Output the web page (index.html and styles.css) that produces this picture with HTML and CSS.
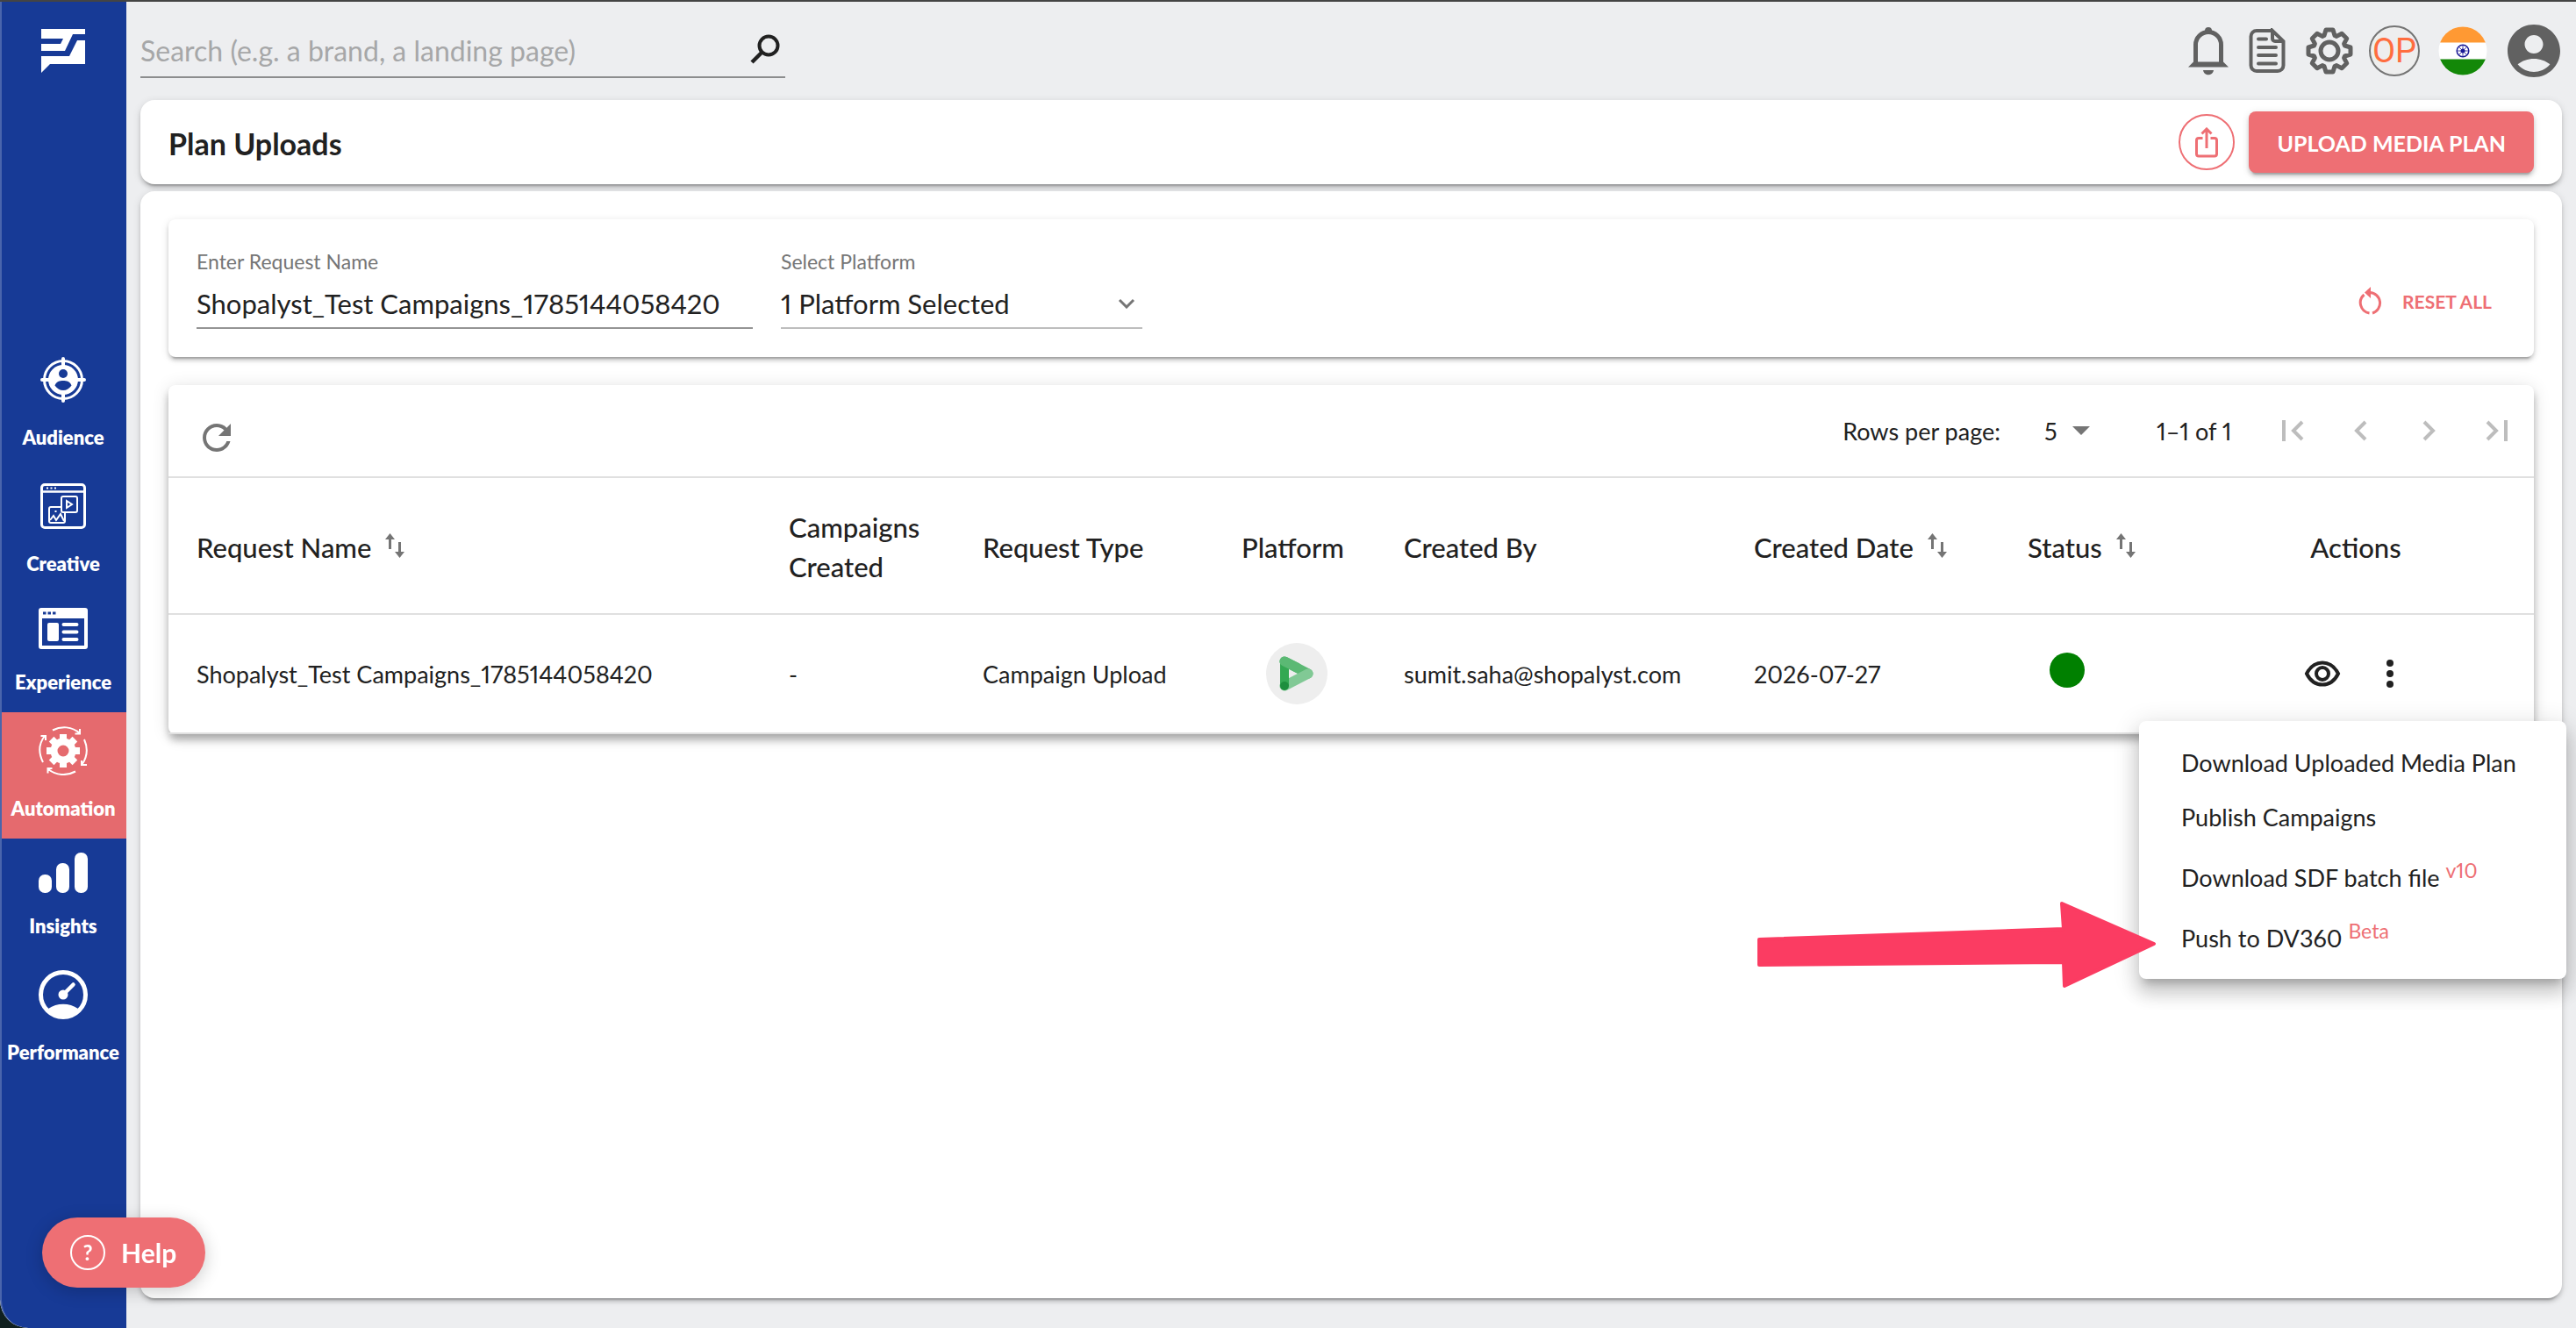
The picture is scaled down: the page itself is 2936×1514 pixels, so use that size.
FILE: index.html
```
<!DOCTYPE html>
<html lang="en">
<head>
  <meta charset="UTF-8" />
  <title>Plan Uploads</title>
  <link rel="stylesheet" href="styles.css">
</head>
<body>
  <div class="app">
    <!-- Left navigation -->
    <aside class="sidebar">
      <a href="#" class="logo" aria-label="Home">
        <svg width="50" height="50" viewBox="0 0 50 50" fill="#fff">
          <path d="M0 0H50V6H36L27 25H0V17H22L25 11H0Z" />
          <path d="M41 13H50V40H10L0 50V31H32Z" />
        </svg>
      </a>
      <nav class="nav">
        <a href="#" class="nav-item">
          <svg width="56" height="56" viewBox="0 0 56 56">
            <circle cx="28" cy="28" r="21.500" fill="none" stroke="#fff" stroke-width="3" />
            <path d="M28 4v8M28 44v8M4 28h8M44 28h8" stroke="#fff" stroke-width="4" stroke-linecap="round" />
            <circle cx="28" cy="28" r="17" fill="#fff" />
            <circle cx="28" cy="21" r="5" fill="#173a96" />
            <path d="M18.500 34.500C20 30 24 29 28 29s8 1 9.500 5.500C35 38 32 40 28 40s-7-2-9.500-5.500z" fill="#173a96" />
          </svg>
          <span>Audience</span>
        </a>
        <a href="#" class="nav-item">
          <svg width="56" height="56" viewBox="0 0 56 56" fill="none" stroke="#fff" stroke-width="2">
            <rect x="3.500" y="3.500" width="49" height="49" rx="3.500" stroke-width="3" />
            <path d="M3 11.500h50" stroke-width="2.500" />
            <path d="M9 7.500h2M13.500 7.500h2M18 7.500h2" />
            <path d="M26 29H14a2 2 0 0 0-2 2v14a2 2 0 0 0 2 2h14a2 2 0 0 0 2-2v-9" />
            <rect x="26" y="17" width="18" height="18" rx="2" />
            <path d="M32 22v8l6-4z" />
            <path d="M13 44l4-5 3 5 5-7 4 8M18.500 34h2" />
          </svg>
          <span>Creative</span>
        </a>
        <a href="#" class="nav-item">
          <svg width="56" height="47" viewBox="0 0 56 47">
            <path fill="#fff" fill-rule="evenodd" d="M3 0h50a3 3 0 0 1 3 3v41a3 3 0 0 1-3 3H3a3 3 0 0 1-3-3V3a3 3 0 0 1 3-3zM4 12v31h48V12z" />
            <path fill="#173a96" d="M5 4.500h3.500v3H5zM10.500 4.500H14v3h-3.500zM16 4.500h3.500v3H16z" />
            <rect x="10" y="17" width="13" height="21" rx="2" fill="#fff" />
            <path d="M28.500 19h15M28.500 27.500h15M28.500 36h15" stroke="#fff" stroke-width="4" stroke-linecap="round" />
          </svg>
          <span>Experience</span>
        </a>
        <a href="#" class="nav-item active">
          <svg width="56" height="56" viewBox="0 0 56 56" fill="none" stroke="#fff" stroke-width="2">
            <circle cx="28" cy="28" r="10.500" stroke-width="8" />
            <path d="M28 9v6M28 41v6M9 28h6M41 28h6M14.600 14.600l4.200 4.200M37.200 37.200l4.200 4.200M14.600 41.400l4.200-4.200M37.200 18.800l4.200-4.200" stroke-width="8" />
            <path d="M16 4.500C26-.5 38 0 47 8M47 3v5.500h-5.500" />
            <path d="M52 15c4 9 4 19-2.500 28.500M55 44l-6 0v-5" />
            <path d="M42 51.500C32 57 20 56 11 49M15.500 48H10.500v5.500" />
            <path d="M5 41C0 31 0 20 7 11M2.500 11H8v5" />
          </svg>
          <span>Automation</span>
        </a>
        <a href="#" class="nav-item">
          <svg width="56" height="46" viewBox="0 0 56 46" fill="#fff">
            <rect x="0" y="25" width="15" height="21" rx="7" />
            <rect x="20" y="12" width="15" height="34" rx="7" />
            <rect x="41" y="0" width="15" height="46" rx="7" />
          </svg>
          <span>Insights</span>
        </a>
        <a href="#" class="nav-item">
          <svg width="56" height="56" viewBox="0 0 56 56">
            <circle cx="28" cy="28" r="25.500" fill="none" stroke="#fff" stroke-width="5" />
            <path d="M11 44c10-7 24-7 34 0-8 12-26 12-34 0z" fill="#fff" />
            <circle cx="28" cy="28" r="5.500" fill="#fff" />
            <path d="M28 28L39.500 16.500" stroke="#fff" stroke-width="4.500" stroke-linecap="round" />
          </svg>
          <span>Performance</span>
        </a>
      </nav>
    </aside>

    <div class="page">
      <header class="topbar">
        <label class="search">
          <input type="text" placeholder="Search (e.g. a brand, a landing page)" aria-label="Search">
          <svg width="34" height="34" viewBox="0 0 34 34" fill="none" stroke="#212121">
            <circle cx="21" cy="13" r="10.500" stroke-width="4" />
            <path d="M14 20L2 32" stroke-width="4.500" />
          </svg>
        </label>
        <div class="top-icons">
          <button class="icon-btn" aria-label="Notifications">
            <svg width="46" height="56" viewBox="0 0 46 56" fill="none" stroke="#616161">
              <path d="M8.500 43V21a14.500 14.500 0 0 1 29 0V43" stroke-width="5" />
              <path d="M0 46.500h46l-6-6H6z" fill="#616161" stroke="none" />
              <path d="M19 9V5a4 4 0 0 1 8 0v4zM17 50h12c-1 7-11 7-12 0z" fill="#616161" stroke="none" />
            </svg>
          </button>
          <button class="icon-btn" aria-label="Documents">
            <svg width="42" height="52" viewBox="0 0 42 52" fill="none" stroke="#616161" stroke-width="4" stroke-linecap="round">
              <path d="M27 3H9a6.500 6.500 0 0 0-6.500 6.500v33A6.500 6.500 0 0 0 9 49h24a6.500 6.500 0 0 0 6.500-6.500V15L27 3v9a3 3 0 0 0 3 3h9" />
              <path d="M11 12.500h9M11 22h20M11 31h20M11 40.500h20" />
            </svg>
          </button>
          <button class="icon-btn" aria-label="Settings">
            <svg width="54" height="54" viewBox="0 0 54 54" fill="none" stroke="#616161" stroke-width="5" stroke-linejoin="round">
              <path d="M21 9.500L23 3h8l2 6.500 2.100.9 6-3.200 5.700 5.700-3.200 6 .9 2.100L51 23v8l-6.500 2-.9 2.100 3.200 6-5.700 5.700-6-3.200-2.100.9L31 51h-8l-2-6.500-2.100-.9-6 3.200-5.700-5.700 3.200-6-.9-2.100L3 31v-8l6.500-2 .9-2.100-3.200-6 5.700-5.700 6 3.200z" />
              <circle cx="27" cy="27" r="10" />
            </svg>
          </button>
          <button class="account" aria-label="Account OP">OP</button>
          <button class="icon-btn" aria-label="India">
            <svg width="56" height="56" viewBox="0 0 56 56">
              <clipPath id="flag"><circle cx="28" cy="28" r="27.500" /></clipPath>
              <g clip-path="url(#flag)">
                <path fill="#fff" d="M0 0h56v56H0z" />
                <path fill="#ff9933" d="M0 0h56v18.500H0z" />
                <path fill="#138808" d="M0 37.500h56V56H0z" />
              </g>
              <g fill="none" stroke="#1a1a96">
                <circle cx="28" cy="28" r="6.800" stroke-width="1.500" />
                <path d="M28 21v14M21 28h14M23 23l10 10M33 23L23 33" stroke-width=".8" />
              </g>
              <circle cx="28" cy="28" r="2.500" fill="#1a1a96" />
            </svg>
          </button>
          <button class="icon-btn" aria-label="Profile">
            <svg width="60" height="60" viewBox="2 2 20 20" fill="#616161">
              <path d="M12 2C6.480 2 2 6.480 2 12s4.480 10 10 10 10-4.480 10-10S17.520 2 12 2zm0 4c1.930 0 3.500 1.570 3.500 3.500S13.930 13 12 13s-3.500-1.570-3.500-3.500S10.070 6 12 6zm0 14c-2.030 0-4.430-.82-6.140-2.880C7.550 15.800 9.680 15 12 15s4.450.8 6.140 2.120C16.430 19.180 14.030 20 12 20z" />
            </svg>
          </button>
        </div>
      </header>

      <section class="title-card">
        <h1>Plan Uploads</h1>
        <button class="share" aria-label="Share">
          <svg width="26" height="35" viewBox="0 0 26 35" fill="none" stroke="#ee6f74" stroke-width="3">
            <path d="M8.500 12.500H4A2.500 2.500 0 0 0 1.500 15v15.500A2.500 2.500 0 0 0 4 33h18a2.500 2.500 0 0 0 2.500-2.500V15a2.500 2.500 0 0 0-2.500-2.500h-4.500M13 24V3M7.500 7.500L13 2l5.500 5.500" />
          </svg>
        </button>
        <button class="upload">UPLOAD MEDIA PLAN</button>
      </section>

      <main class="content">
        <!-- Filters -->
        <form class="card filters">
          <div class="field name-field">
            <label for="requestName">Enter Request Name</label>
            <input type="text" id="requestName" value="Shopalyst_Test Campaigns_1785144058420">
          </div>
          <div class="field platform-field">
            <label for="platform">Select Platform</label>
            <div class="select-box">
              <select id="platform"><option>1 Platform Selected</option></select>
              <svg width="20" height="12" viewBox="0 0 20 12" fill="none" stroke="#757575" stroke-width="3"><path d="M2 2l8 8 8-8" /></svg>
            </div>
          </div>
          <button type="reset" class="reset">
            <svg width="28" height="32" viewBox="0 0 28 32" fill="none" stroke="#ee6f74" stroke-width="3">
              <path d="M13 6.500a12 12 0 0 1 3 23.500M12.500 30A12 12 0 0 1 6.500 9" />
              <path d="M14 0v13L7 6.500z" fill="#ee6f74" stroke="none" />
            </svg>
            RESET ALL
          </button>
        </form>

        <!-- Requests -->
        <section class="card requests">
          <div class="toolbar">
            <button class="icon-btn refresh" aria-label="Refresh">
              <svg width="32" height="32" viewBox="4 4 16 16" fill="#757575">
                <path d="M17.650 6.350C16.200 4.900 14.210 4 12 4c-4.420 0-7.990 3.580-7.990 8s3.570 8 7.990 8c3.730 0 6.840-2.550 7.730-6h-2.080c-.82 2.330-3.040 4-5.650 4-3.310 0-6-2.690-6-6s2.690-6 6-6c1.660 0 3.140.69 4.220 1.780L13 11h7V4l-2.350 2.350z" />
              </svg>
            </button>
            <label for="rows">Rows per page:</label>
            <div class="rows-box">
              <select id="rows"><option>5</option></select>
              <svg width="20" height="10" viewBox="0 0 20 10" fill="#757575"><path d="M0 0h20L10 10z" /></svg>
            </div>
            <span class="range">1–1 of 1</span>
            <div class="pager">
              <button class="icon-btn" aria-label="First page" disabled><svg width="26" height="24" viewBox="0 0 26 24"><path d="M2 0v24M23 2L13 12l10 10" /></svg></button>
              <button class="icon-btn" aria-label="Previous page" disabled><svg width="26" height="24" viewBox="0 0 26 24"><path d="M18 2L8 12l10 10" /></svg></button>
              <button class="icon-btn" aria-label="Next page" disabled><svg width="26" height="24" viewBox="0 0 26 24"><path d="M8 2l10 10L8 22" /></svg></button>
              <button class="icon-btn" aria-label="Last page" disabled><svg width="26" height="24" viewBox="0 0 26 24"><path d="M24 0v24M3 2l10 10L3 22" /></svg></button>
            </div>
          </div>

          <table>
            <colgroup>
              <col>
              <col class="col-count">
              <col class="col-type">
              <col class="col-platform">
              <col class="col-user">
              <col class="col-date">
              <col class="col-status">
              <col class="col-actions">
            </colgroup>
            <thead>
              <tr>
                <th>Request Name <button class="sort" aria-label="Sort by name"><svg width="22" height="28" viewBox="0 0 22 28"><path d="M5.500 18V3M16.500 10v15" /><path class="head" d="M5.500 0l5.500 7H0zM16.500 28l5.500-7H11z" /></svg></button></th>
                <th>Campaigns Created</th>
                <th>Request Type</th>
                <th>Platform</th>
                <th>Created By</th>
                <th>Created Date <button class="sort" aria-label="Sort by date"><svg width="22" height="28" viewBox="0 0 22 28"><path d="M5.500 18V3M16.500 10v15" /><path class="head" d="M5.500 0l5.500 7H0zM16.500 28l5.500-7H11z" /></svg></button></th>
                <th>Status <button class="sort" aria-label="Sort by status"><svg width="22" height="28" viewBox="0 0 22 28"><path d="M5.500 18V3M16.500 10v15" /><path class="head" d="M5.500 0l5.500 7H0zM16.500 28l5.500-7H11z" /></svg></button></th>
                <th class="center">Actions</th>
              </tr>
            </thead>
            <tbody>
              <tr>
                <td>Shopalyst_Test Campaigns_1785144058420</td>
                <td>-</td>
                <td>Campaign Upload</td>
                <td>
                  <span class="platform-logo">
                    <svg width="40" height="40" viewBox="0 0 40 40" fill="none" stroke-linecap="round">
                      <path d="M6 6L33 20" stroke="#5bb974" stroke-width="11" />
                      <path d="M33 20L6 34" stroke="#81c995" stroke-width="11" />
                      <path d="M6 6v28" stroke="#34a853" stroke-width="10" stroke-linecap="butt" />
                      <path d="M6 6l14 7" stroke="#5bb974" stroke-width="11" />
                      <circle cx="6" cy="34" r="5" fill="#1e8e3e" />
                    </svg>
                  </span>
                </td>
                <td>sumit.saha@shopalyst.com</td>
                <td>2026-07-27</td>
                <td><span class="status-dot"></span></td>
                <td class="center">
                  <div class="actions">
                    <button class="icon-btn" aria-label="View">
                      <svg width="42" height="30" viewBox="0 0 42 30" fill="none" stroke="#212121" stroke-width="4">
                        <path d="M3 15C7 7 13.500 2.500 21 2.500S35 7 39 15c-4 8-10.500 12.500-18 12.500S7 23 3 15z" />
                        <circle cx="21" cy="15" r="7" />
                      </svg>
                    </button>
                    <button class="icon-btn" aria-label="More">
                      <svg width="10" height="32" viewBox="0 0 10 32" fill="#212121"><circle cx="5" cy="4" r="4" /><circle cx="5" cy="16" r="4" /><circle cx="5" cy="28" r="4" /></svg>
                    </button>
                  </div>
                </td>
              </tr>
            </tbody>
          </table>

          <div class="menu">
            <button>Download Uploaded Media Plan</button>
            <button>Publish Campaigns</button>
            <button class="tagged">Download SDF batch file <sup>v10</sup></button>
            <button class="tagged">Push to DV360 <sup>Beta</sup></button>
          </div>

          <svg class="pointer" width="456" height="100" viewBox="0 0 456 100" fill="#fb3c62" stroke="#fb3c62" stroke-width="4" stroke-linejoin="round">
            <path d="M3 44L350 32 348 3 453 49 351 97 350 70 3 73z" />
          </svg>
        </section>
      </main>
    </div>
  </div>

  <button class="help">
    <span class="help-icon">?</span>
    Help
  </button>
</body>
</html>
```
FILE: styles.css
```
* {
  box-sizing: border-box;
}
body {
  margin: 0;
  font-family: Lato, "Open Sans", sans-serif;
  font-size: 27px;
  font-variant-numeric: proportional-nums;
  color: #212121;
  background-color: #10201f;
}
button, input, select {
  font: inherit;
  color: inherit;
  border: 0;
  padding: 0;
  margin: 0;
  background: none;
  outline: 0;
}
svg {
  display: block;
}
.app {
  display: flex;
  min-height: 100vh;
  border-top: 2px solid #444;
  border-bottom-left-radius: 32px;
  background-color: #edeef0;
  overflow: hidden;
}

/* sidebar */
.sidebar {
  flex: none;
  width: 144px;
  background-color: #173a96;
  border-left: 2px solid #4a65ac;
  border-bottom-left-radius: 32px;
}
.logo {
  display: flex;
  justify-content: center;
  padding-top: 31px;
  padding-right: 2px;
}
.nav {
  margin-top: 306px;
}
.nav-item {
  display: flex;
  flex-direction: column;
  align-items: center;
  gap: 24px;
  padding: 16px 2px 20px 0;
  color: #fff;
  font-size: 22px;
  font-weight: 800;
  line-height: 28px;
  text-decoration: none;
}
.nav-item.active {
  background-color: #e56a6e;
}

/* top bar */
.page {
  flex: 1;
  min-width: 0;
  display: flex;
  flex-direction: column;
  padding: 0 16px 34px;
}
.topbar {
  display: flex;
  justify-content: space-between;
  align-items: center;
  height: 112px;
}
.search {
  display: flex;
  align-items: center;
  width: 735px;
  height: 64px;
  margin-bottom: 3px;
  padding-right: 6px;
  border-bottom: 2px solid #8c8d8e;
}
.search input {
  flex: 1;
  padding-top: 4px;
  font-size: 32px;
}
.search input::placeholder {
  color: #a6a7a8;
}
.top-icons {
  display: flex;
  align-items: center;
  gap: 23px;
  padding-right: 2px;
}
.account {
  width: 58px;
  height: 58px;
  margin: 0 -2px 0 -5px;
  border: 2px solid #757575;
  border-radius: 50%;
  background-color: #eee;
  color: #ff6d3f;
  font-family: Roboto, sans-serif;
  font-size: 38px;
}

/* title */
.title-card {
  display: flex;
  align-items: center;
  gap: 16px;
  height: 96px;
  padding: 0 32px;
  border-radius: 16px;
  background-color: #fff;
  box-shadow: 0 6px 2px -4px rgba(0, 0, 0, 0.2), 0 4px 4px rgba(0, 0, 0, 0.14), 0 2px 10px rgba(0, 0, 0, 0.12);
}
h1 {
  flex: 1;
  margin: 0;
  padding-top: 3px;
  font-size: 34px;
  font-weight: 700;
}
.share {
  display: flex;
  align-items: center;
  justify-content: center;
  width: 64px;
  height: 64px;
  border: 2px solid #ee6f74;
  border-radius: 50%;
}
.upload {
  height: 70px;
  padding: 2px 32px 0;
  border-radius: 8px;
  background-color: #ee6f74;
  color: #fff;
  font-size: 25px;
  font-weight: 700;
  box-shadow: 0 6px 2px -4px rgba(0, 0, 0, 0.2), 0 4px 4px rgba(0, 0, 0, 0.14), 0 2px 10px rgba(0, 0, 0, 0.12);
}

/* content */
.content {
  flex: 1;
  margin-top: 8px;
  padding: 32px;
  border-radius: 16px;
  background-color: #fff;
  box-shadow: 0 6px 2px -4px rgba(0, 0, 0, 0.2), 0 4px 4px rgba(0, 0, 0, 0.14), 0 2px 10px rgba(0, 0, 0, 0.12);
}
.card {
  border-radius: 8px;
  background-color: #fff;
  box-shadow: 0 6px 2px -4px rgba(0, 0, 0, 0.2), 0 4px 4px rgba(0, 0, 0, 0.14), 0 2px 10px rgba(0, 0, 0, 0.12);
}
.filters {
  display: flex;
  align-items: flex-end;
  gap: 32px;
  height: 157px;
  padding: 32px;
}
.field label {
  display: block;
  margin-bottom: 7px;
  font-size: 23px;
  line-height: 28px;
  color: #757575;
}
.field input, .select-box {
  width: 100%;
  height: 56px;
  font-size: 31px;
  border-bottom: 2px solid #949494;
}
.name-field {
  width: 634px;
}
.platform-field {
  width: 412px;
}
.select-box {
  display: flex;
  align-items: center;
  padding-right: 8px;
  border-color: #bdbdbd;
}
select {
  appearance: none;
}
.select-box select {
  flex: 1;
}
.reset {
  display: flex;
  align-items: center;
  gap: 22px;
  margin-left: auto;
  margin-right: 16px;
  margin-bottom: 16px;
  color: #ee6f74;
  font-size: 21px;
  font-weight: 700;
}

/* requests table */
.requests {
  position: relative;
  margin-top: 32px;
  box-shadow: 0 6px 10px -2px rgba(0, 0, 0, 0.2), 0 8px 10px rgba(0, 0, 0, 0.14), 0 2px 20px rgba(0, 0, 0, 0.12);
}
.toolbar {
  display: flex;
  align-items: center;
  height: 106px;
  padding: 0 30px 0 39px;
  border-bottom: 2px solid #e0e0e0;
}
.refresh {
  margin-right: auto;
  margin-top: 16px;
}
.rows-box {
  display: flex;
  align-items: center;
  width: 52px;
  margin: 0 76px 0 50px;
}
.rows-box select {
  flex: 1;
}
.range {
  min-width: 100px;
}
.pager {
  display: flex;
  gap: 51px;
  margin-left: 43px;
}
.pager path {
  fill: none;
  stroke: #bdbdbd;
  stroke-width: 4;
}
table {
  width: 100%;
  table-layout: fixed;
  border-collapse: collapse;
}
.col-count {
  width: 221px;
}
.col-type {
  width: 295px;
}
.col-platform {
  width: 185px;
}
.col-user {
  width: 399px;
}
.col-date {
  width: 312px;
}
.col-status {
  width: 203px;
}
.col-actions {
  width: 406px;
}
th, td {
  padding: 0 0 0 32px;
  border-bottom: 2px solid #e0e0e0;
  text-align: left;
  white-space: nowrap;
}
th {
  height: 155px;
  padding-top: 4px;
  font-size: 31px;
  font-weight: 500;
  line-height: 45px;
  white-space: normal;
}
.center {
  padding-left: 0;
  text-align: center;
}
td {
  height: 136px;
}
.sort {
  margin-left: 8px;
}
.sort path {
  fill: none;
  stroke: #757575;
  stroke-width: 3;
}
.sort .head {
  fill: #757575;
  stroke: none;
}
.platform-logo {
  display: flex;
  align-items: center;
  justify-content: center;
  width: 70px;
  height: 70px;
  margin-left: 28px;
  border-radius: 50%;
  background-color: #eee;
}
.status-dot {
  display: block;
  width: 40px;
  height: 40px;
  margin: 0 0 8px 25px;
  border-radius: 50%;
  background-color: #008000;
}
.actions {
  display: flex;
  justify-content: center;
  gap: 51px;
  padding-right: 16px;
}
.actions .icon-btn {
  display: flex;
  align-items: center;
}

/* row menu */
.menu {
  position: absolute;
  top: 383px;
  right: -37px;
  width: 487px;
  padding: 16px 0;
  border-radius: 8px;
  background-color: #fff;
  box-shadow: 0 10px 10px -6px rgba(0, 0, 0, 0.2), 0 16px 20px 2px rgba(0, 0, 0, 0.14), 0 6px 28px 4px rgba(0, 0, 0, 0.12);
}
.menu button {
  display: block;
  width: 100%;
  height: 62px;
  padding-left: 48px;
  text-align: left;
}
.menu .tagged {
  height: 69px;
  padding-top: 7px;
}
.menu sup {
  color: #ee6f74;
  font-size: 23px;
  line-height: 0;
}
.pointer {
  position: absolute;
  top: 588px;
  right: 430px;
}

/* help button */
.help {
  position: fixed;
  left: 48px;
  bottom: 46px;
  display: flex;
  align-items: center;
  gap: 18px;
  width: 186px;
  height: 80px;
  padding-left: 32px;
  border-radius: 40px;
  background-color: #ee6f74;
  color: #fff;
  font-size: 30px;
  font-weight: 700;
  box-shadow: 0 4px 20px rgba(0, 0, 0, 0.2);
}
.help-icon {
  width: 40px;
  height: 40px;
  border: 2px solid #fff;
  border-radius: 50%;
  font-size: 24px;
  line-height: 36px;
  text-align: center;
}
```
